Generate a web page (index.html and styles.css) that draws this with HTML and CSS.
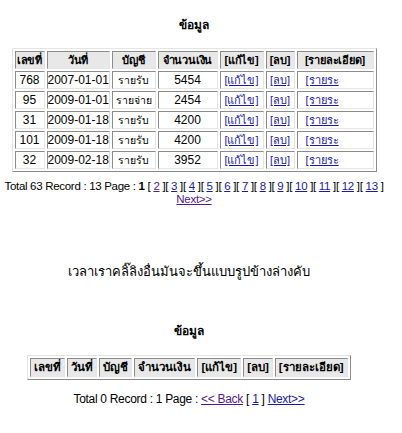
FILE: index.html
```html
<!DOCTYPE html>
<html lang="th">
<head>
<meta charset="utf-8">
<title>ข้อมูล</title>
<link rel="stylesheet" href="styles.css">
</head>
<body>
<div class="section top">
  <div class="title">ข้อมูล</div>
  <table class="grid full">
    <colgroup>
      <col class="c1"><col class="c2"><col class="c3"><col class="c4"><col class="c5"><col class="c6"><col class="c7">
    </colgroup>
    <tr>
      <th>เลขที่</th><th>วันที่</th><th>บัญชี</th><th>จำนวนเงิน</th><th>[แก้ไข]</th><th>[ลบ]</th><th>[รายละเอียด]</th>
    </tr>
    <tr><td>768</td><td>2007-01-01</td><td class="th">รายรับ</td><td>5454</td><td><a href="#">[แก้ไข]</a></td><td><a href="#">[ลบ]</a></td><td class="left"><a href="#">[รายระ</a></td></tr>
    <tr><td>95</td><td>2009-01-01</td><td class="th">รายจ่าย</td><td>2454</td><td><a href="#">[แก้ไข]</a></td><td><a href="#">[ลบ]</a></td><td class="left"><a href="#">[รายระ</a></td></tr>
    <tr><td>31</td><td>2009-01-18</td><td class="th">รายรับ</td><td>4200</td><td><a href="#">[แก้ไข]</a></td><td><a href="#">[ลบ]</a></td><td class="left"><a href="#">[รายระ</a></td></tr>
    <tr><td>101</td><td>2009-01-18</td><td class="th">รายรับ</td><td>4200</td><td><a href="#">[แก้ไข]</a></td><td><a href="#">[ลบ]</a></td><td class="left"><a href="#">[รายระ</a></td></tr>
    <tr><td>32</td><td>2009-02-18</td><td class="th">รายรับ</td><td>3952</td><td><a href="#">[แก้ไข]</a></td><td><a href="#">[ลบ]</a></td><td class="left"><a href="#">[รายระ</a></td></tr>
  </table>
  <div class="pager">Total 63 Record : 13 Page : <b>1</b> [ <a class="visited" href="#">2</a> ][ <a href="#">3</a> ][ <a href="#">4</a> ][ <a href="#">5</a> ][ <a href="#">6</a> ][ <a href="#">7</a> ][ <a href="#">8</a> ][ <a href="#">9</a> ][ <a href="#">10</a> ][ <a href="#">11</a> ][ <a href="#">12</a> ][ <a href="#">13</a> ]<br><a class="visited" href="#">Next&gt;&gt;</a></div>
</div>
<div class="section bottom">
  <p class="note">เวลาเราคลิ๊ลิงอื่นมันจะขึ้นแบบรูปข้างล่างคับ</p>
  <div class="title">ข้อมูล</div>
  <table class="grid empty">
    <tr>
      <th>เลขที่</th><th>วันที่</th><th>บัญชี</th><th>จำนวนเงิน</th><th>[แก้ไข]</th><th>[ลบ]</th><th>[รายละเอียด]</th>
    </tr>
  </table>
  <div class="pager">Total 0 Record : 1 Page : <a class="visited" href="#">&lt;&lt; Back</a> [ <a href="#">1</a> ] <a href="#">Next&gt;&gt;</a></div>
</div>
</body>
</html>
```

FILE: styles.css
```css
html, body {
  margin: 0;
  padding: 0;
  background: #ffffff;
  color: #000000;
  font-family: Tahoma, "Liberation Sans", "Noto Sans", sans-serif;
  font-size: 13px;
}

.section {
  text-align: center;
}

.top {
  width: 388px;
  padding-top: 17px;
}

.bottom {
  width: 378px;
}

.title {
  font-weight: bold;
  font-size: 12px;
  line-height: 16px;
}

.grid {
  margin: 15px auto 0;
  border-collapse: separate;
  border-spacing: 2px;
  border: 1px solid;
  border-color: #e4e4e4 #8c8c8c #8c8c8c #e4e4e4;
}

.grid.full {
  width: 353px;
  table-layout: fixed;
}

.grid th,
.grid td {
  border: 1px solid;
  border-color: #8c8c8c #e4e4e4 #e4e4e4 #8c8c8c;
  padding: 0;
  height: 16px;
  line-height: 16px;
  white-space: nowrap;
  text-align: center;
  overflow: hidden;
}

.grid th {
  background: #e8e8e8;
  font-weight: bold;
  font-size: 11px;
  letter-spacing: -0.2px;
}

.grid td {
  background: #ffffff;
  font-family: "Liberation Sans", sans-serif;
  font-size: 12px;
}

.grid td.th {
  font-size: 10.5px;
}

.grid td a {
  font-size: 11px;
}

.grid td.left {
  text-align: left;
  padding-left: 8px;
}

.c1 { width: 30px; }
.c2 { width: 63px; }
.c3 { width: 44px; }
.c4 { width: 60px; }
.c5 { width: 44px; }
.c6 { width: 29px; }
.c7 { width: 77px; }

.empty th {
  padding: 0 3px;
  height: 17px;
  line-height: 17px;
  font-size: 11.5px;
  letter-spacing: 0;
}

a {
  color: #1a1aa6;
}

a.visited {
  color: #551a8b;
}

.pager {
  margin-top: 8px;
  line-height: 13px;
  font-size: 11.5px;
  font-family: "Liberation Sans", sans-serif;
  letter-spacing: -0.3px;
  white-space: nowrap;
}

.note {
  margin: 56px 0 0;
  font-size: 13px;
  line-height: 20px;
}

.bottom .title {
  margin-top: 41px;
}

.empty {
  margin-top: 16px;
}

.bottom .pager {
  margin-top: 13px;
  font-size: 12px;
}
```
